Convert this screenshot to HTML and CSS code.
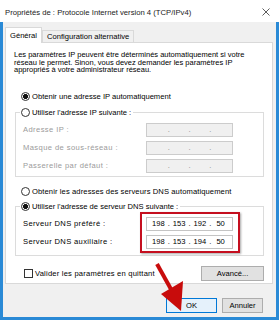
FILE: index.html
```html
<!DOCTYPE html>
<html>
<head>
<meta charset="utf-8">
<title>Propriétés de : Protocole Internet version 4 (TCP/IPv4)</title>
<link rel="stylesheet" href="styles.css">
</head>
<body>

<div class="dialog">
	<div class="titlebar">
		<span class="title">Propriétés de : Protocole Internet version 4 (TCP/IPv4)</span>
		<svg class="close" width="8" height="8" viewBox="0 0 8 8"><path d="M0.5 0.5L7.5 7.5M7.5 0.5L0.5 7.5" stroke="#333" stroke-width="0.8" fill="none"/></svg>
	</div>

	<div class="frame">
		<div class="tabs">
			<div class="tab active">Général</div>
			<div class="tab">Configuration alternative</div>
		</div>

		<div class="panel">
			<p class="intro">Les paramètres IP peuvent être déterminés automatiquement si votre<br>réseau le permet. Sinon, vous devez demander les paramètres IP<br>appropriés à votre administrateur réseau.</p>

			<div class="radio checked first">Obtenir une adresse IP automatiquement</div>
			<fieldset class="group">
				<legend><span class="radio">Utiliser l'adresse IP suivante :</span></legend>
				<div class="row disabled"><span class="label">Adresse IP :</span><span class="ip"><i></i><b>.</b><i></i><b>.</b><i></i><b>.</b><i></i></span></div>
				<div class="row disabled"><span class="label">Masque de sous-réseau :</span><span class="ip"><i></i><b>.</b><i></i><b>.</b><i></i><b>.</b><i></i></span></div>
				<div class="row disabled"><span class="label">Passerelle par défaut :</span><span class="ip"><i></i><b>.</b><i></i><b>.</b><i></i><b>.</b><i></i></span></div>
			</fieldset>

			<div class="radio dns-auto">Obtenir les adresses des serveurs DNS automatiquement</div>
			<fieldset class="group dns">
				<legend><span class="radio checked">Utiliser l'adresse de serveur DNS suivante :</span></legend>
				<div class="dns-rows">
					<div class="labels">
						<span>Serveur DNS préféré :</span>
						<span>Serveur DNS auxiliaire :</span>
					</div>
					<div class="highlight">
						<span class="ip"><i>198</i><b>.</b><i>153</i><b>.</b><i>192</i><b>.</b><i>50</i></span>
						<span class="ip"><i>198</i><b>.</b><i>153</i><b>.</b><i>194</i><b>.</b><i>50</i></span>
					</div>
				</div>
			</fieldset>

			<div class="options">
				<span class="checkbox">Valider les paramètres en quittant</span>
				<button class="btn advanced">Avancé...</button>
			</div>
		</div>

		<div class="actions">
			<button class="btn ok">OK</button>
			<button class="btn cancel">Annuler</button>
		</div>
	</div>

	<svg class="arrow" width="279" height="320" viewBox="0 0 279 320">
		<line x1="157" y1="264" x2="172" y2="291" stroke="#c80c0c" stroke-width="4"/>
		<polygon points="161,294 183,281 181,311" fill="#c80c0c"/>
	</svg>
</div>

</body>
</html>
```

FILE: styles.css
```css
body{
	margin:0;
	font-family:"Liberation Sans", Arial, sans-serif;
	font-size:7.6px;
	color:#000;
}
.dialog{
	position:relative;
	width:279px;
	height:320px;
	display:flex;
	flex-direction:column;
	background:#fff;
	overflow:hidden;
}
.titlebar{
	height:22px;
	flex:none;
	display:flex;
	align-items:center;
	justify-content:space-between;
	padding:3px 9px 0 5px;
	box-sizing:border-box;
}
.title{
	font-size:7.7px;
	color:#1a1a1a;
}
.close{
	display:block;
	margin-top:-2px;
}
.frame{
	flex:1;
	display:flex;
	flex-direction:column;
	background:#f0f0f0;
	border:3px solid #2a8ad6;
	border-top:0;
	padding:5px 3px 0 2px;
}

/* tabs */
.tabs{
	display:flex;
	align-items:flex-end;
	height:16px;
	margin-bottom:-1px;
}
.tab{
	height:13px;
	line-height:12px;
	padding:0 4px;
	border:1px solid #d9d9d9;
	border-bottom:0;
	box-sizing:border-box;
	background:#f0f0f0;
	white-space:nowrap;
}
.tab.active{
	height:16px;
	line-height:15px;
	padding:0 4px;
	background:#fff;
	position:relative;
	z-index:1;
}
.panel{
	height:242px;
	flex:none;
	box-sizing:border-box;
	background:#fff;
	border:1px solid #d9d9d9;
	padding:0 8px 0 9px;
	display:flex;
	flex-direction:column;
}
.intro{
	margin:8px 0 0 -1px;
	font-size:7.5px;
	line-height:7.6px;
	white-space:nowrap;
}

/* radios and checkbox */
.radio, .checkbox{
	display:flex;
	align-items:center;
	gap:2px;
	height:10px;
	white-space:nowrap;
}
.radio::before{
	content:"";
	width:9px;
	height:9px;
	box-sizing:border-box;
	border:1px solid #333;
	border-radius:50%;
	background:#fff;
	flex:none;
}
.radio.checked::before{
	background:radial-gradient(circle, #111 0 2.2px, #fff 2.8px);
}
.checkbox{
	letter-spacing:0.2px;
}
.checkbox::before{
	content:"";
	width:9px;
	height:9px;
	box-sizing:border-box;
	border:1px solid #333;
	background:#fff;
	flex:none;
}
.radio.first{
	margin:18px 0 0 6px;
}
.radio.dns-auto{
	margin:10px 0 0 6px;
	letter-spacing:0.1px;
}

/* group boxes */
.group{
	margin:6px 0 0;
	padding:5px 0 3px;
	border:1px solid #dcdcdc;
	min-width:0;
}
.group legend{
	margin-left:4px;
	padding:0 2px 0 1px;
}
.group.dns{
	margin-top:5px;
	padding:0 0 2px;
}
.row{
	display:flex;
	align-items:center;
	height:14px;
	padding-left:7px;
}
.row + .row{
	margin-top:4px;
}
.row .label{
	width:123px;
	flex:none;
	letter-spacing:0.4px;
}
.row.disabled .label{
	color:#9b9b9b;
}
.ip{
	display:flex;
	align-items:center;
	width:87px;
	height:14px;
	box-sizing:border-box;
	border:1px solid #c4c4c4;
	background:#fff;
	padding:0 3px;
}
.ip i{
	flex:1;
	font-style:normal;
	text-align:center;
}
.ip b{
	font-weight:normal;
	width:4px;
	text-align:center;
}
.disabled .ip{
	background:#f0f0f0;
	border-color:#cccccc;
	color:#8a8a8a;
}
.dns-rows{
	display:flex;
	padding-left:7px;
}
.labels{
	width:117px;
	display:flex;
	flex-direction:column;
	gap:4px;
	padding-top:5px;
	letter-spacing:0.35px;
}
.labels span{
	height:14px;
	line-height:14px;
}
.highlight{
	display:flex;
	flex-direction:column;
	gap:4px;
	padding:3px 5px 2px 4px;
	border:2px solid #c50f1f;
	box-shadow:1px 1px 2px rgba(0,0,0,0.35);
}

/* buttons */
.options{
	display:flex;
	align-items:center;
	justify-content:space-between;
	margin-top:10px;
	padding-left:9px;
}
.btn{
	height:15px;
	padding:0;
	border:1px solid #adadad;
	background:#e1e1e1;
	font-family:inherit;
	font-size:7.6px;
	color:#000;
}
.advanced{
	width:63px;
}
.actions{
	display:flex;
	justify-content:flex-end;
	gap:5px;
	margin-top:14px;
	padding-right:10px;
}
.ok{
	width:51px;
	background:#e5f1fb;
	border-color:#0078d7;
}
.cancel{
	width:41px;
}
.arrow{
	position:absolute;
	left:0;
	top:0;
	pointer-events:none;
}
```
